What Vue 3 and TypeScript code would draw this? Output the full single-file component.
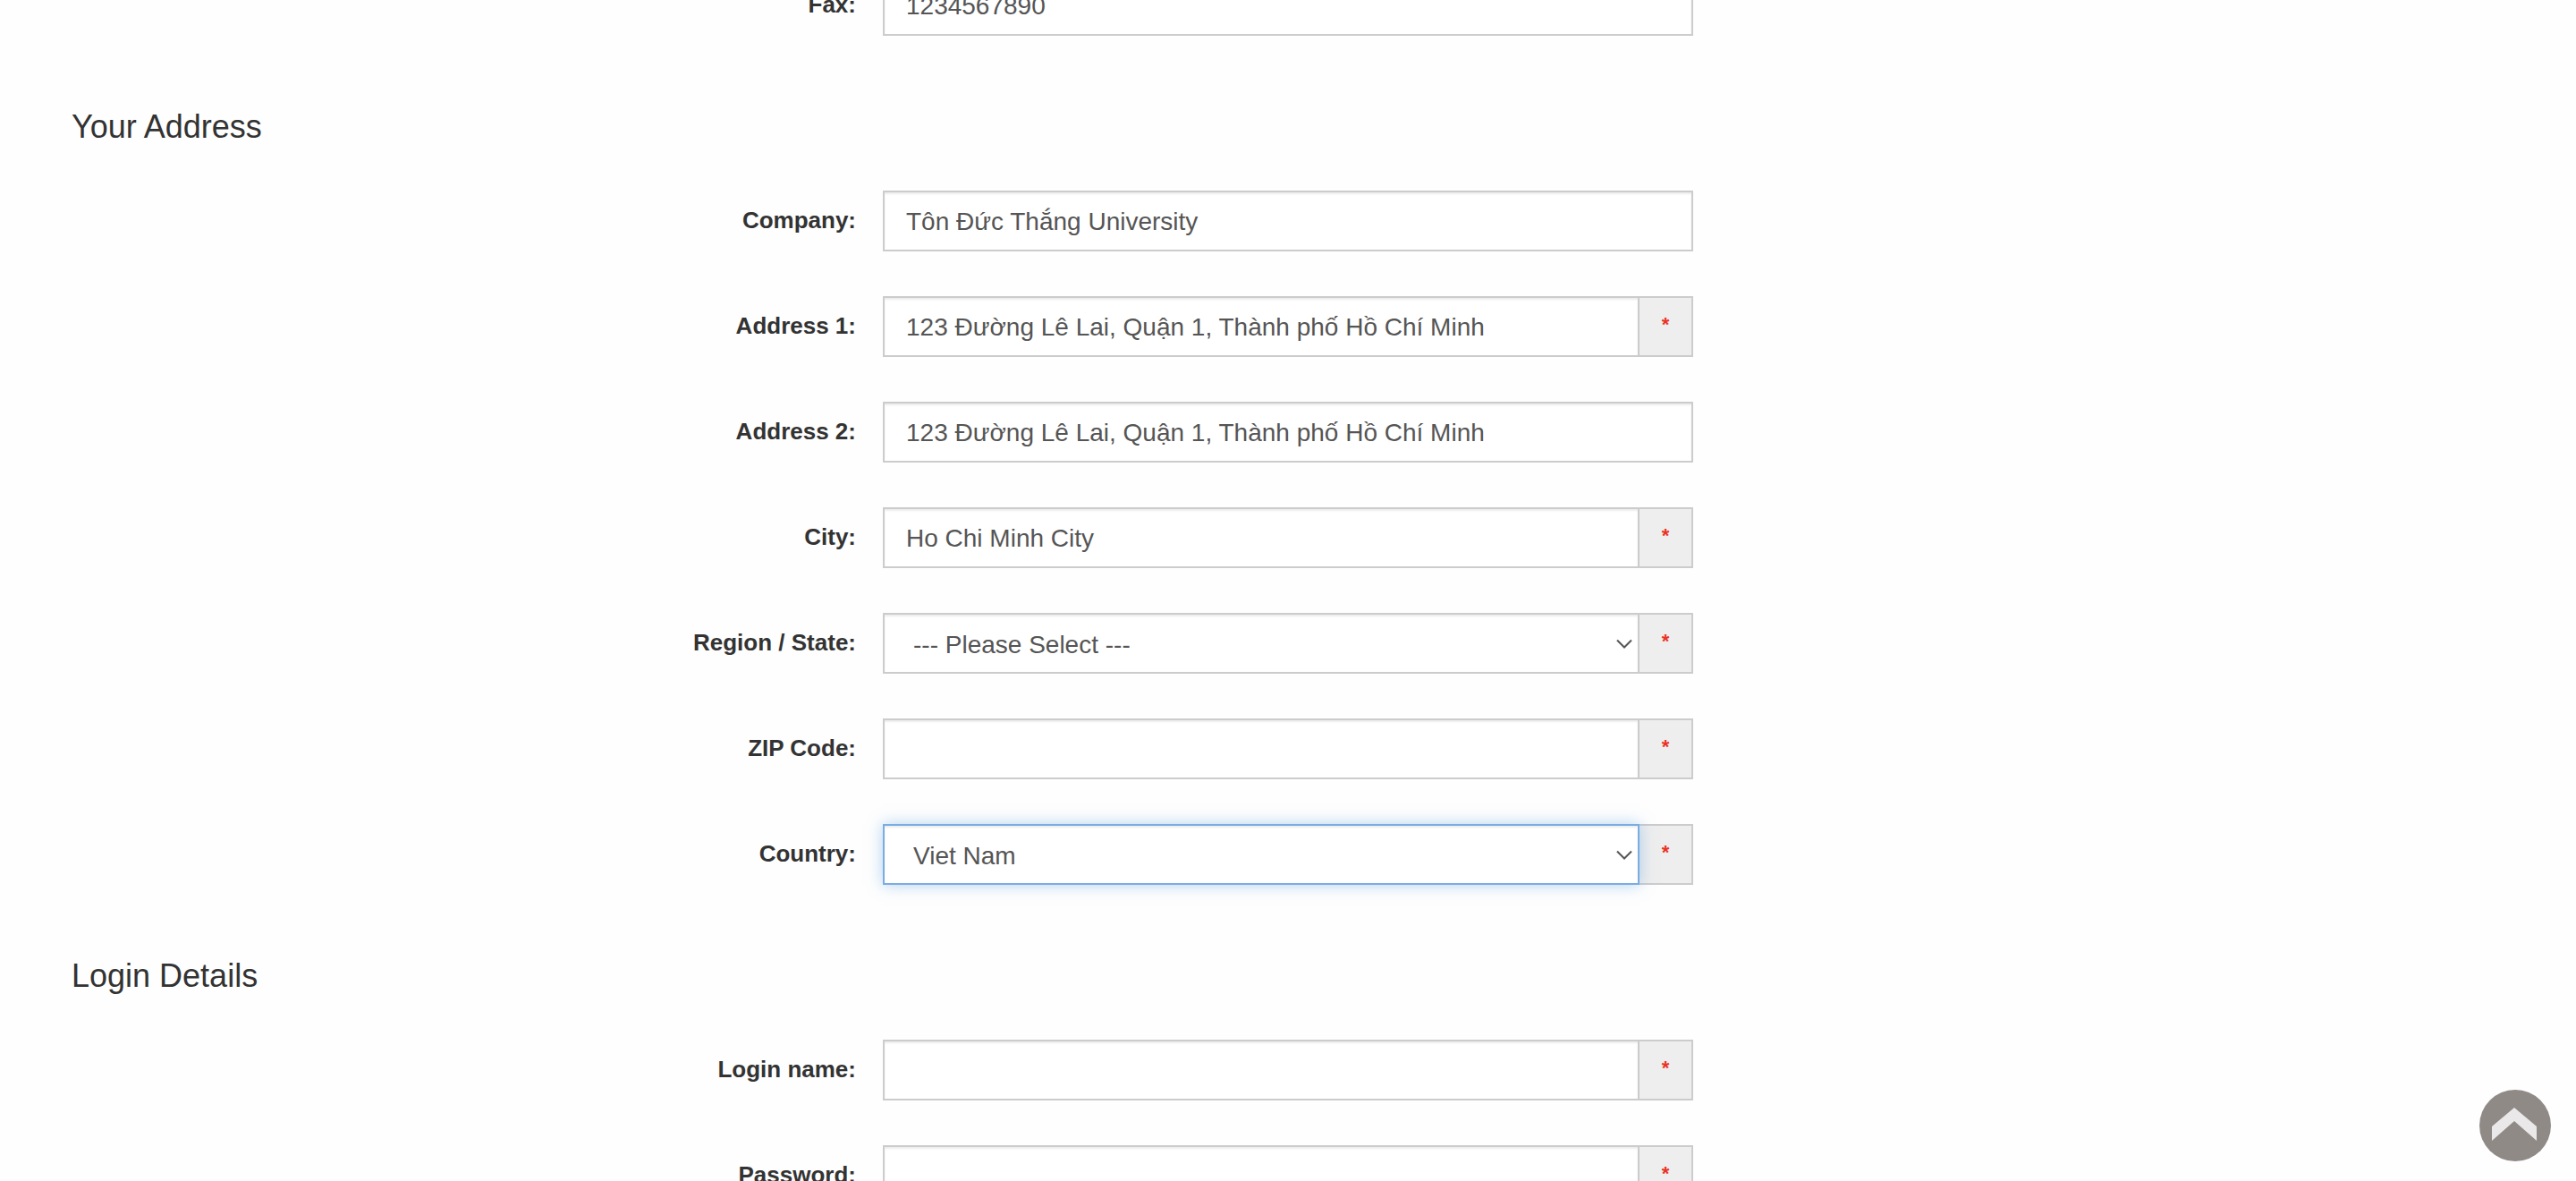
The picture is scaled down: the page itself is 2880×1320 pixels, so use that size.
<script setup lang="ts">
import { reactive } from 'vue'

interface Field {
  id: string
  label: string
  value: string
  type?: string
  required?: boolean
  options?: string[]
  active?: boolean
}

interface Section {
  title?: string
  fields: Field[]
}

const sections = reactive<Section[]>([
  { fields: [{ id: 'fax', label: 'Fax:', value: '1234567890' }] },
  {
    title: 'Your Address',
    fields: [
      { id: 'company', label: 'Company:', value: 'Tôn Đức Thắng University' },
      { id: 'address1', label: 'Address 1:', value: '123 Đường Lê Lai, Quận 1, Thành phố Hồ Chí Minh', required: true },
      { id: 'address2', label: 'Address 2:', value: '123 Đường Lê Lai, Quận 1, Thành phố Hồ Chí Minh' },
      { id: 'city', label: 'City:', value: 'Ho Chi Minh City', required: true },
      { id: 'zone', label: 'Region / State:', value: '--- Please Select ---', required: true, options: ['--- Please Select ---'] },
      { id: 'zip', label: 'ZIP Code:', value: '', required: true },
      { id: 'country', label: 'Country:', value: 'Viet Nam', required: true, options: ['Viet Nam'], active: true },
    ],
  },
  {
    title: 'Login Details',
    fields: [
      { id: 'loginname', label: 'Login name:', value: '', required: true },
      { id: 'password', label: 'Password:', value: '', type: 'password', required: true },
    ],
  },
])

function scrollToTop() {
  window.scrollTo({ top: 0, behavior: 'smooth' })
}
</script>

<template>
  <div class="viewport">
    <form class="form" @submit.prevent>
      <section v-for="(section, i) in sections" :key="i" class="section">
        <h2 v-if="section.title" class="title">{{ section.title }}</h2>
        <div class="rows">
          <div v-for="field in section.fields" :key="field.id" class="row">
            <label class="label" :for="field.id">{{ field.label }}</label>
            <div class="group">
              <div v-if="field.options" class="picker" :class="{ active: field.active }">
                <select :id="field.id" v-model="field.value" class="control select">
                  <option v-for="option in field.options" :key="option">{{ option }}</option>
                </select>
                <svg class="arrow" viewBox="0 0 18 12" aria-hidden="true">
                  <path d="M1 1.5 9 9.5 17 1.5" fill="none" stroke="#555" stroke-width="2" />
                </svg>
              </div>
              <input v-else :id="field.id" v-model="field.value" class="control" :type="field.type ?? 'text'" />
              <span v-if="field.required" class="addon">*</span>
            </div>
          </div>
        </div>
      </section>
    </form>
    <button class="to-top" type="button" aria-label="Back to top" @click="scrollToTop">
      <svg viewBox="0 0 80 80" aria-hidden="true">
        <circle cx="40" cy="40" r="40" fill="#908a87" />
        <path d="M14 41 39 20 64 41V57L39 35 14 57Z" fill="#eae8e8" />
      </svg>
    </button>
  </div>
</template>

<style>
body {
  margin: 0;
  background: #fefefe;
}
</style>

<style scoped>
.viewport {
  height: 100vh;
  overflow: hidden;
  font-family: "Liberation Sans", Arial, Helvetica, sans-serif;
  color: #333;
}

/* The form is scrolled part-way through the Fax row. */
.form {
  margin-top: -28px;
}

.title {
  margin: 0;
  padding: 81px 80px 50px;
  font-size: 36px;
  font-weight: 400;
  line-height: 42px;
}

.rows {
  display: flex;
  flex-direction: column;
  gap: 50px;
}

.row {
  display: grid;
  grid-template-columns: repeat(3, minmax(0, 1fr));
  column-gap: 30px;
  padding: 0 51px;
}

.label {
  padding-top: 18px;
  font-size: 26px;
  font-weight: 700;
  line-height: 30px;
  text-align: right;
}

.group {
  display: flex;
}

.control {
  box-sizing: border-box;
  flex: 1;
  width: 100%;
  min-width: 0;
  height: 68px;
  margin: 0;
  padding: 2px 24px 0;
  border: 2px solid #ccc;
  border-radius: 0;
  outline: none;
  background: #fff;
  box-shadow: inset 0 2px 2px rgba(0, 0, 0, 0.075);
  color: #555;
  font-family: inherit;
  font-size: 28px;
}

.picker {
  position: relative;
  z-index: 1;
  flex: 1;
  min-width: 0;
}

.select {
  display: block;
  padding: 2px 32px 0;
  appearance: none;
}

.active .select {
  border-color: #7aade4;
  box-shadow: inset 0 2px 2px rgba(0, 0, 0, 0.075), 0 0 16px rgba(102, 165, 226, 0.5);
}

.arrow {
  position: absolute;
  top: 29px;
  right: 8px;
  width: 18px;
  height: 12px;
  pointer-events: none;
}

.addon {
  box-sizing: border-box;
  width: 60px;
  height: 68px;
  border: 2px solid #ccc;
  border-left: 0;
  background: #eee;
  color: #ea3323;
  font-size: 22px;
  font-weight: 700;
  line-height: 60px;
  text-align: center;
}

.to-top {
  position: fixed;
  right: 28px;
  bottom: 22px;
  width: 80px;
  height: 80px;
  padding: 0;
  border: 0;
  border-radius: 50%;
  background: none;
  cursor: pointer;
}

.to-top svg {
  display: block;
  width: 100%;
  height: 100%;
}
</style>
